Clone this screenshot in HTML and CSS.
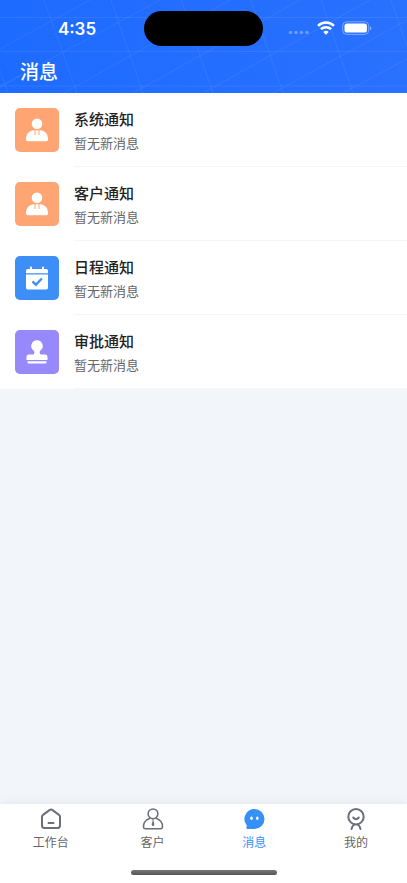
FILE: index.html
```html
<!DOCTYPE html>
<html lang="zh-CN">
<head>
    <meta charset="UTF-8">
    <meta name="viewport" content="width=device-width, initial-scale=1.0">
    <title>消息</title>
    <link rel="stylesheet" href="styles.css">
</head>
<body>
    <header class="header">
        <svg class="header-pattern" viewBox="0 0 407 93" preserveAspectRatio="none" aria-hidden="true">
            <path d="M0 17.500H407M0 51.500H407M0 86H407"/>
            <path d="M-25 0L8 93M44 0L77 93M111 0L143 93M181 0L213 93M251 0L283 93M321 0L353 93M391 0L423 93"/>
            <path d="M0 49L90 0M-10 93L22 75M0 86L160 0M64 93L230 0M133 93L300 0M203 93L370 0M273 93L420 13M343 93L420 52"/>
        </svg>
        <div class="status-bar">
            <div class="status-time">4:35</div>
            <div class="island"></div>
            <div class="status-icons">
                <svg width="22" height="18" viewBox="0 0 22 18" fill="#fff" opacity="0.3">
                    <circle cx="2.500" cy="12.500" r="1.800"/>
                    <circle cx="8" cy="12.500" r="1.800"/>
                    <circle cx="13.500" cy="12.500" r="1.800"/>
                    <circle cx="19" cy="12.500" r="1.800"/>
                </svg>
                <svg width="18" height="18" viewBox="0 0 18 18" fill="none" stroke="#fff" stroke-width="2.500">
                    <path d="M1 5.800a11.600 11.600 0 0 1 16 0"/>
                    <path d="M3.900 9.200a7.400 7.400 0 0 1 10.200 0"/>
                    <path d="M9 14.800L6.300 12.100a3.900 3.900 0 0 1 5.400 0z" fill="#fff" stroke="none"/>
                </svg>
                <svg width="30" height="18" viewBox="0 0 30 18">
                    <rect x="0.700" y="1.800" width="26" height="12.600" rx="4" fill="none" stroke="#fff" stroke-opacity="0.4"/>
                    <rect x="2.500" y="3.600" width="22.400" height="9" rx="2.600" fill="#fff"/>
                    <path d="M28 6.300v4c1.800-.6 1.800-3.400 0-4z" fill="#fff" opacity="0.5"/>
                </svg>
            </div>
        </div>
        <h1 class="header-title">消息</h1>
    </header>

    <main class="content">
        <ul class="message-list">
            <li class="message-item">
                <div class="message-icon icon-orange">
                    <svg width="44" height="44" viewBox="0 0 44 44" fill="#fff">
                        <circle cx="22" cy="15.800" r="5.300"/>
                        <path d="M18 22.300H26C30.500 23.300 33 26.500 33 31.500Q33 33.300 31.500 33.300H12.500Q11 33.300 11 31.500C11 26.500 13.500 23.300 18 22.300z"/>
                        <path d="M20 22v5M24 22v5" fill="none" stroke="#ffa574" stroke-width="1"/>
                    </svg>
                </div>
                <div class="message-body">
                    <div class="message-title">系统通知</div>
                    <div class="message-desc">暂无新消息</div>
                </div>
            </li>
            <li class="message-item">
                <div class="message-icon icon-orange">
                    <svg width="44" height="44" viewBox="0 0 44 44" fill="#fff">
                        <circle cx="22" cy="15.800" r="5.300"/>
                        <path d="M18 22.300H26C30.500 23.300 33 26.500 33 31.500Q33 33.300 31.500 33.300H12.500Q11 33.300 11 31.500C11 26.500 13.500 23.300 18 22.300z"/>
                        <path d="M20 22v5M24 22v5" fill="none" stroke="#ffa574" stroke-width="1"/>
                    </svg>
                </div>
                <div class="message-body">
                    <div class="message-title">客户通知</div>
                    <div class="message-desc">暂无新消息</div>
                </div>
            </li>
            <li class="message-item">
                <div class="message-icon icon-blue">
                    <svg width="44" height="44" viewBox="0 0 44 44">
                        <path d="M11 17.200V14.800Q11 13 12.800 13H15V11.500Q15 10.500 16 10.500T17 11.500V13H27V11.500Q27 10.500 28 10.500T29 11.500V13H31.200Q33 13 33 14.800V17.200z" fill="#fff"/>
                        <path d="M11 18.500H33V31.700Q33 33.500 31.200 33.500H12.800Q11 33.500 11 31.700z" fill="#fff"/>
                        <path d="M17.500 25.300l3.500 3.500 5.800-6.300" fill="none" stroke="#3e8ef7" stroke-width="2.400"/>
                    </svg>
                </div>
                <div class="message-body">
                    <div class="message-title">日程通知</div>
                    <div class="message-desc">暂无新消息</div>
                </div>
            </li>
            <li class="message-item">
                <div class="message-icon icon-purple">
                    <svg width="44" height="44" viewBox="0 0 44 44" fill="#fff">
                        <path d="M22 10.300a5.700 5.700 0 0 1 3.400 10.300c-1 1-1 2.900.1 4h4.500q2.500 0 2.500 2.400v3H11.500v-3q0-2.400 2.500-2.400h4.500c1.100-1.100 1.100-3 .1-4A5.700 5.700 0 0 1 22 10.300z"/>
                        <path d="M12.500 31.200h19v1.300q0 1-1 1h-17q-1 0-1-1z"/>
                    </svg>
                </div>
                <div class="message-body">
                    <div class="message-title">审批通知</div>
                    <div class="message-desc">暂无新消息</div>
                </div>
            </li>
        </ul>
    </main>

    <nav class="tabbar">
        <div class="tabs">
            <a class="tab" href="#">
                <svg class="tab-icon" viewBox="0 0 22 22">
                    <path d="M2 8.800Q2 7.600 3 6.900L9.800 1.900Q11 1.100 12.200 1.900L19 6.900Q20 7.600 20 8.800V17.500Q20 20 17.500 20H4.500Q2 20 2 17.500z"/>
                    <path d="M8.500 15h5"/>
                </svg>
                <span>工作台</span>
            </a>
            <a class="tab" href="#">
                <svg class="tab-icon tab-icon-thin" viewBox="0 0 22 22">
                    <circle cx="11" cy="5.800" r="4.900"/>
                    <path d="M7.500 10.500C4 11.800 1.500 14.500 1.500 18.500Q1.500 20.800 3.500 20.800H18.500Q20.500 20.800 20.500 18.500C20.500 14.500 18 11.800 14.500 10.500"/>
                    <path d="M11 11.500v5.500" stroke-width="1"/>
                    <path d="M11 14.500l.6 2-.6.800-.6-.8z"/>
                </svg>
                <span>客户</span>
            </a>
            <a class="tab active" href="#" aria-current="page">
                <svg class="tab-icon" viewBox="0 0 22 22">
                    <path d="M11.500 1a10 10 0 0 1 0 20H4.300Q3.200 21 3.400 20L3.700 17.300A10 10 0 0 1 11.500 1z" fill="#3590f8" stroke="none"/>
                    <ellipse cx="8.500" cy="10.200" rx="1.300" ry="1.700" fill="#fff" stroke="none"/>
                    <ellipse cx="14.300" cy="10.200" rx="1.300" ry="1.700" fill="#fff" stroke="none"/>
                </svg>
                <span>消息</span>
            </a>
            <a class="tab" href="#">
                <svg class="tab-icon" viewBox="0 0 22 22">
                    <circle cx="11" cy="8.700" r="7.700"/>
                    <path d="M8.200 9.500q2.800 3.400 5.600 0"/>
                    <path d="M6.500 21Q7 18 9.500 16.500M15.500 21Q15 18 12.500 16.500"/>
                </svg>
                <span>我的</span>
            </a>
        </div>
        <div class="home-indicator"></div>
    </nav>
</body>
</html>
```

FILE: styles.css
```css
* {
    box-sizing: border-box;
}

body {
    font-family: "Inter", "Noto Sans CJK SC", sans-serif;
    background-color: #f2f5fa;
    color: #222;
    margin: 0;
    min-height: 100vh;
    display: flex;
    flex-direction: column;
}

.header {
    position: relative;
    background: linear-gradient(90deg, #1e6bff, #2971ff);
    color: #fff;
    padding-bottom: 4px;
}

.header-pattern {
    position: absolute;
    top: 0;
    left: 0;
    width: 100%;
    height: 100%;
    fill: none;
    stroke: #fff;
    stroke-opacity: 0.07;
}

.status-bar {
    position: relative;
    display: grid;
    grid-template-columns: 1fr 119px 1fr;
    align-items: center;
    height: 57px;
}

.status-time {
    font-size: 17px;
    line-height: 20px;
    font-weight: 600;
    text-align: center;
    padding-left: 10px;
}

.island {
    height: 35px;
    border-radius: 18px;
    background-color: #000;
}

.status-icons {
    display: flex;
    justify-content: flex-end;
    align-items: center;
    gap: 7px;
    padding-right: 35px;
}

.header-title {
    position: relative;
    margin: 0;
    padding: 0 20px;
    font-size: 19px;
    line-height: 32px;
    font-weight: 500;
}

.content {
    flex: 1;
}

.message-list {
    list-style: none;
    margin: 0;
    padding: 0;
    background-color: #fff;
}

.message-item {
    display: flex;
    padding-left: 15px;
    gap: 15px;
}

.message-icon {
    width: 44px;
    height: 44px;
    margin: 15px 0;
    border-radius: 5px;
}

.message-icon svg {
    display: block;
}

.icon-orange {
    background-color: #ffa574;
}

.icon-blue {
    background-color: #3e8ef7;
}

.icon-purple {
    background-color: #9788fc;
}

.message-body {
    flex: 1;
    padding: 15px 15px 10px 0;
    border-bottom: 1px solid #f6f6f6;
}

.message-title {
    font-size: 15px;
    line-height: 24px;
    font-weight: 500;
}

.message-desc {
    font-size: 13px;
    line-height: 22px;
    color: #666;
}

.tabbar {
    background-color: #fff;
    box-shadow: 0 0 10px rgba(0, 0, 0, 0.08);
    padding: 4px 0 8px;
}

.tabs {
    display: flex;
}

.tab {
    flex: 1;
    display: flex;
    flex-direction: column;
    align-items: center;
    font-size: 12px;
    line-height: 20px;
    color: #666;
    text-decoration: none;
}

.tab-icon {
    width: 22px;
    height: 22px;
    margin-bottom: 3px;
    fill: none;
    stroke: #6c6f7a;
    stroke-width: 2;
    stroke-linecap: round;
    stroke-linejoin: round;
}

.tab-icon-thin {
    stroke-width: 1.5px;
}

.active {
    color: #3590f8;
}

.home-indicator {
    width: 146px;
    height: 5px;
    margin: 17px auto 0;
    border-radius: 3px;
    background: linear-gradient(#777, #555);
}
```
